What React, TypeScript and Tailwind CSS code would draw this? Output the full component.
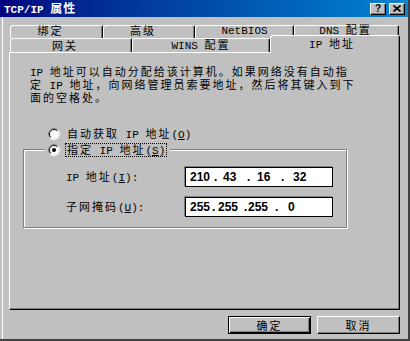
import React from "react";

// ASCII runs use a narrow mono face so they sit at half the width of a CJK character
const M = ({ children, className = "" }: { children: React.ReactNode; className?: string }) => (
  <span className={"font-['Liberation_Mono',monospace] text-[11px] tracking-normal " + className}>{children}</span>
);

const Radio = ({ checked }: { checked?: boolean }) => (
  <svg width="12" height="12" viewBox="0 0 12 12" className="shrink-0">
    <circle cx="6" cy="6" r="5.5" fill="#fff" />
    <path d="M2.1 9.9 A5.5 5.5 0 0 1 9.9 2.1" fill="none" stroke="#808080" />
    <path d="M9.9 2.1 A5.5 5.5 0 0 1 2.1 9.9" fill="none" stroke="#fff" />
    <path d="M2.8 9.2 A4.5 4.5 0 0 1 9.2 2.8" fill="none" stroke="#000" />
    <path d="M9.2 2.8 A4.5 4.5 0 0 1 2.8 9.2" fill="none" stroke="#dfdfdf" />
    {checked && <circle cx="6" cy="6" r="2" fill="#000" />}
  </svg>
);

const Tab = ({ w, children, className = "" }: { w: string; children: React.ReactNode; className?: string }) => (
  <div
    className={
      "flex items-center justify-center bg-[#c0c0c0] border-t border-l border-white border-r border-r-black rounded-tl-[3px] rounded-tr-[2px] shadow-[inset_-1px_0_0_#808080] " +
      w +
      " " +
      className
    }
  >
    <span className="whitespace-pre leading-[11px]">{children}</span>
  </div>
);

const TitleBtn = ({ children }: { children: React.ReactNode }) => (
  <div className="w-[16px] h-[12px] flex items-center justify-center bg-[#c0c0c0] border border-t-white border-l-white border-r-black border-b-black shadow-[inset_-1px_-1px_0_#808080]">
    {children}
  </div>
);

const Ip = ({ parts }: { parts: [string, string][] }) => (
  <div className="w-[148px] h-[20px] bg-white border border-black shadow-[-1px_-1px_0_#808080] flex items-center pl-[4px] font-['Liberation_Sans',sans-serif] font-bold text-[12px] tracking-normal">
    {parts.map(([t, w], i) => (
      <span key={i} className={"shrink-0 " + w}>
        {t}
      </span>
    ))}
  </div>
);

export default function App() {
  return (
    <div className="w-[410px] h-[341px] bg-[#c0c0c0] border-r-2 border-b-2 border-[#404040] flex flex-col text-black text-[11px] tracking-[2px] leading-none font-['Noto_Sans_CJK_SC',sans-serif] overflow-hidden">
      {/* 标题栏 */}
      <div className="h-[17px] shrink-0 flex items-center justify-between pl-[4px] pr-[3px] bg-linear-to-r from-[#000080] to-[#1084d0]">
        <span className="text-white font-bold whitespace-pre text-[12px] tracking-[1px]">
          <M className="font-bold">TCP/IP </M>属性
        </span>
        <div className="flex gap-[3px]">
          <TitleBtn>
            <span className="font-['Liberation_Sans',sans-serif] font-bold text-[10px] tracking-normal">?</span>
          </TitleBtn>
          <TitleBtn>
            <svg width="8" height="7" viewBox="0 0 8 7">
              <path d="M0.5 0.5 L7.5 6.5 M7.5 0.5 L0.5 6.5" stroke="#000" strokeWidth="1.6" />
            </svg>
          </TitleBtn>
        </div>
      </div>

      <div className="flex-1 ml-[2px] border-l border-white pl-[6px] flex flex-col">
        {/* 选项卡 */}
        <div className="pt-[8px] pl-[1px]">
          <div className="flex h-[13px]">
            <Tab w="w-[93px]" className="pr-[12px] pb-[3px]">绑定</Tab>
            <Tab w="w-[92px]" className="pr-[12px] pb-[3px]">高级</Tab>
            <Tab w="w-[99px]" className="pb-[3px]">
              <M>NetBIOS</M>
            </Tab>
            <Tab w="w-[105px]" className="pr-[2px] pb-[3px]">
              <M>DNS </M>配置
            </Tab>
          </div>
          <div className="flex h-[14px] items-end">
            <Tab w="w-[122px]" className="h-[14px] pr-[12px]">网关</Tab>
            <Tab w="w-[138px]" className="h-[14px]">
              <M>WINS </M>配置
            </Tab>
            <Tab w="w-[130px]" className="h-[18px] -mb-[1px] relative z-10 pr-[6px]">
              <M>IP </M>地址
            </Tab>
          </div>
        </div>

        {/* 面板 */}
        <div className="w-[391px] h-[258px] shrink-0 border border-t-white border-l-white border-r-black border-b-black shadow-[inset_-1px_-1px_0_#808080] pt-[13px]">
          <div className="ml-[20px] leading-[11px] whitespace-pre">
            <M>IP </M>地址可以自动分配给该计算机。如果网络没有自动指
            <br />
            定<M> IP </M>地址，向网络管理员索要地址，然后将其键入到下
            <br />
            面的空格处。
          </div>

          <div className="mt-[25px] ml-[38px] h-[12px] flex items-center gap-[7px]">
            <Radio />
            <span className="whitespace-pre">
              自动获取<M> IP </M>地址
              <M>
                (<u>O</u>)
              </M>
            </span>
          </div>

          <div className="mt-[9px] ml-[13px] w-[324px] h-[79px] border border-[#808080] shadow-[inset_1px_1px_0_#fff,1px_1px_0_#fff]">
            <div className="-mt-[7px] ml-[21px] w-fit h-[14px] px-[3px] bg-[#c0c0c0] flex items-center gap-[5px]">
              <Radio checked />
              <span className="h-[14px] flex items-center px-[1px] border border-dotted border-black">
                <span className="whitespace-pre">
                  指定<M> IP </M>地址
                  <M>
                    (<u>S</u>)
                  </M>
                </span>
              </span>
            </div>

            <div className="mt-[10px] ml-[42px] h-[20px] flex items-center">
              <span className="w-[119px] shrink-0 whitespace-pre">
                <M>IP </M>地址
                <M>
                  (<u>I</u>):
                </M>
              </span>
              <Ip
                parts={[
                  ["210", "w-[24px]"],
                  [".", "w-[9px]"],
                  ["43", "w-[24px]"],
                  [".", "w-[10px]"],
                  ["16", "w-[24px]"],
                  [".", "w-[12px]"],
                  ["32", ""],
                ]}
              />
            </div>
            <div className="mt-[10px] ml-[42px] h-[20px] flex items-center">
              <span className="w-[119px] shrink-0">
                子网掩码
                <M>
                  (<u>U</u>):
                </M>
              </span>
              <Ip
                parts={[
                  ["255", "w-[22px]"],
                  [".", "w-[6px]"],
                  ["255", "w-[26px]"],
                  [".", "w-[4px]"],
                  ["255", "w-[27px]"],
                  [".", "w-[13px]"],
                  ["0", ""],
                ]}
              />
            </div>
          </div>
        </div>

        {/* 按钮 */}
        <div className="w-[391px] mt-[6px] flex justify-end gap-[6px]">
          <div className="w-[83px] h-[18px] flex items-center justify-center border border-black shadow-[inset_1px_1px_0_#fff,inset_-1px_-1px_0_#000,inset_-2px_-2px_0_#808080]">
            确定
          </div>
          <div className="w-[83px] h-[18px] flex items-center justify-center border border-t-white border-l-white border-r-black border-b-black shadow-[inset_-1px_-1px_0_#808080]">
            取消
          </div>
        </div>
      </div>
    </div>
  );
}
